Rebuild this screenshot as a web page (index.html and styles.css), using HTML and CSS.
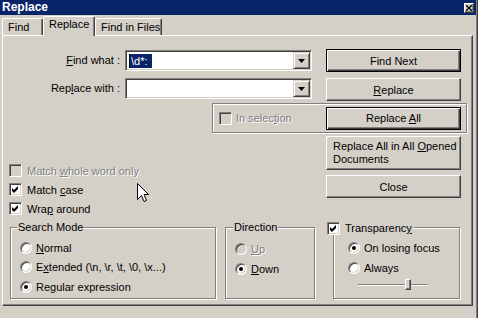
FILE: index.html
```html
<!DOCTYPE html>
<html lang="en">

<head>
    <meta charset="UTF-8">
    <title>Replace</title>
    <link rel="stylesheet" href="styles.css">
</head>

<body>
    <div class="window">
        <div class="titlebar">
            <span class="title">Replace</span>
            <span class="close-x">
                <svg width="6" height="6" viewBox="0 0 6 6"><path d="M0 0 L6 6 M6 0 L0 6" stroke="#000" stroke-width="1.3"/></svg>
            </span>
        </div>

        <div class="tabs">
            <div class="tab tab-find">Find</div>
            <div class="tab tab-replace active">Replace</div>
            <div class="tab tab-files">Find in Files</div>
        </div>

        <div class="panel">
            <div class="form">
                <label class="lbl lbl-find"><u>F</u>ind what :</label>
                <div class="combo combo-find">
                    <span class="combo-text"><span class="sel">\d*:</span></span>
                    <span class="drop"><svg width="7" height="4" viewBox="0 0 7 4"><path d="M0 0 H7 L3.5 4 Z" fill="#000"/></svg></span>
                </div>
                <button class="btn btn-default btn-next">Find Next</button>

                <label class="lbl lbl-repl">Rep<u>l</u>ace with :</label>
                <div class="combo combo-repl">
                    <span class="combo-text"></span>
                    <span class="drop"><svg width="7" height="4" viewBox="0 0 7 4"><path d="M0 0 H7 L3.5 4 Z" fill="#000"/></svg></span>
                </div>
                <button class="btn btn-replace"><u>R</u>eplace</button>

                <div class="selframe">
                    <span class="check off"></span>
                    <span class="disabled">In selec<u>t</u>ion</span>
                    <button class="btn btn-default btn-all">Replace <u>A</u>ll</button>
                </div>

                <button class="btn btn-docs">Replace All in All <u>O</u>pened<br>Documents</button>
                <button class="btn btn-close">Close</button>

                <div class="checks">
                    <div class="opt"><span class="check off"></span><span class="disabled">Match <u>w</u>hole word only</span></div>
                    <div class="opt"><span class="check"><svg width="7" height="7" viewBox="0 0 7 7"><path d="M0 2 L2 4 L6 0 V3 L2 7 L0 5 Z" fill="#000"/></svg></span><span>Match <u>c</u>ase</span></div>
                    <div class="opt"><span class="check"><svg width="7" height="7" viewBox="0 0 7 7"><path d="M0 2 L2 4 L6 0 V3 L2 7 L0 5 Z" fill="#000"/></svg></span><span>Wra<u>p</u> around</span></div>
                </div>
            </div>

            <div class="groups">
                <div class="group group-mode">
                    <span class="legend">Search Mode</span>
                    <div class="ropt"><span class="radio"></span><span><u>N</u>ormal</span></div>
                    <div class="ropt"><span class="radio"></span><span>E<u>x</u>tended (\n, \r, \t, \0, \x...)</span></div>
                    <div class="ropt"><span class="radio on"></span><span>Re<u>g</u>ular expression</span></div>
                </div>

                <div class="group group-dir">
                    <span class="legend">Direction</span>
                    <div class="ropt"><span class="radio off"></span><span class="disabled"><u>U</u>p</span></div>
                    <div class="ropt"><span class="radio on"></span><span><u>D</u>own</span></div>
                </div>

                <div class="group group-trans">
                    <span class="legend legend-check">
                        <span class="check"><svg width="7" height="7" viewBox="0 0 7 7"><path d="M0 2 L2 4 L6 0 V3 L2 7 L0 5 Z" fill="#000"/></svg></span>
                        <span>Transparenc<u>y</u></span>
                    </span>
                    <div class="ropt"><span class="radio on"></span><span>On losing focus</span></div>
                    <div class="ropt"><span class="radio"></span><span>Always</span></div>
                    <div class="slider">
                        <div class="track"></div>
                        <span class="thumb"></span>
                    </div>
                </div>
            </div>
        </div>

        <!-- mouse pointer -->
        <svg class="cursor" width="12" height="20" viewBox="0 0 12 20">
            <path d="M0.5 0.5 V16.5 L4.5 12.5 L7 18.5 L9.5 17.5 L7 11.5 H11.5 Z" fill="#fff" stroke="#000" stroke-width="1"/>
        </svg>
    </div>
</body>

</html>
```
FILE: styles.css
```css
/* Reset */
* {
    margin: 0;
    padding: 0;
    box-sizing: border-box;
}

body {
    width: 481px;
    height: 318px;
    overflow: hidden;
    background: #ffffff;
    font: 11px "Liberation Sans", Arial, sans-serif;
    color: #000;
}

u {
    text-decoration: underline;
    text-underline-offset: 1px;
}

/* Window frame */
.window {
    position: relative;
    width: 478px;
    height: 318px;
    background: #d4d0c8;
    border-right: 1px solid #404040;
    box-shadow: inset -1px 0 #808080;
}

.titlebar {
    height: 15px;
    margin-right: 1px;
    background: #0a246a;
    display: flex;
    align-items: center;
    justify-content: space-between;
}

.title {
    color: #fff;
    font-weight: bold;
    font-size: 12px;
    padding-left: 2px;
    line-height: 15px;
}

.close-x {
    width: 10px;
    height: 10px;
    margin-right: 2px;
    background: #d4d0c8;
    border: 1px solid;
    border-color: #fff #404040 #404040 #fff;
    box-shadow: inset -1px -1px #808080;
    display: flex;
    align-items: center;
    justify-content: center;
}

/* Tabs */
.tabs {
    display: flex;
    height: 20px;
    padding-left: 2px;
    align-items: flex-start;
}

.tab {
    margin-top: 3px;
    height: 17px;
    padding: 1px 0 0 5px;
    line-height: 15px;
    background: #d4d0c8;
    border-top: 1px solid #fff;
    border-left: 1px solid #fff;
    border-right: 1px solid #404040;
    box-shadow: inset -1px 0 #808080;
    border-radius: 2px 2px 0 0;
}

.tab-find {
    width: 41px;
}

.tab-replace {
    width: 52px;
}

.tab-files {
    width: 67px;
}

.tab.active {
    position: relative;
    z-index: 1;
    margin-top: 1px;
    height: 20px;
    padding-top: 0;
}

/* Tab page */
.panel {
    position: relative;
    margin-left: 2px;
    width: 471px;
    height: 271px;
    border: 1px solid;
    border-color: #fff #404040 #404040 #fff;
    box-shadow: inset -1px -1px #808080;
}

.form {
    display: grid;
    grid-template-columns: 122px 187px 14px 135px;
    grid-template-rows: 29px 25px 30px 39px 24px auto;
    margin-top: 13px;
    align-items: start;
}

.lbl {
    grid-column: 1;
    text-align: right;
    padding-right: 5px;
    line-height: 21px;
}

.lbl-find {
    grid-row: 1;
    margin-top: 1px;
}

.lbl-repl {
    grid-row: 2;
}

/* Combo boxes */
.combo {
    grid-column: 2;
    height: 21px;
    background: #fff;
    border: 1px solid;
    border-color: #808080 #fff #fff #808080;
    box-shadow: inset 1px 1px #404040, inset -1px -1px #d4d0c8;
    display: flex;
    align-items: center;
    padding: 1px;
}

.combo-find {
    grid-row: 1;
    margin-top: 1px;
}

.combo-repl {
    grid-row: 2;
}

.combo-text {
    flex: 1;
    padding-left: 2px;
    display: flex;
    align-items: center;
}

.sel {
    background: #0a246a;
    color: #fff;
    border-left: 1px solid #000;
    padding: 0 4px 0 1px;
    line-height: 14px;
}

.drop {
    width: 17px;
    height: 17px;
    background: #d4d0c8;
    border: 1px solid;
    border-color: #d4d0c8 #404040 #404040 #d4d0c8;
    box-shadow: inset 1px 1px #fff, inset -1px -1px #808080;
    display: flex;
    align-items: center;
    justify-content: center;
}

/* Push buttons */
.btn {
    font: inherit;
    color: #000;
    height: 23px;
    background: #d4d0c8;
    border: 1px solid;
    border-color: #fff #404040 #404040 #fff;
    box-shadow: inset -1px -1px #808080;
    text-align: center;
}

.btn-default {
    border-color: #000;
    box-shadow: inset 1px 1px #fff, inset -1px -1px #404040, inset -2px -2px #808080;
}

.btn-next,
.btn-replace,
.btn-docs,
.btn-close {
    grid-column: 4;
}

.btn-next {
    grid-row: 1;
}

.btn-replace {
    grid-row: 2;
}

.btn-docs {
    grid-row: 4;
    margin-top: 3px;
    height: 34px;
    text-align: left;
    padding-left: 6px;
    line-height: 13px;
}

.btn-close {
    grid-row: 5;
    margin-top: 3px;
}

/* In selection frame */
.selframe {
    grid-column: 2 / 5;
    grid-row: 3;
    margin-left: 87px;
    margin-right: -6px;
    height: 30px;
    display: flex;
    align-items: center;
    gap: 4px;
    padding: 0 5px 0 6px;
    border: 1px solid #808080;
    box-shadow: inset 1px 1px #fff, 1px 1px #fff;
}

.btn-all {
    margin-left: auto;
    width: 135px;
}

/* Check boxes */
.check {
    flex: none;
    width: 13px;
    height: 13px;
    background: #fff;
    border: 1px solid;
    border-color: #808080 #fff #fff #808080;
    box-shadow: inset 1px 1px #404040, inset -1px -1px #d4d0c8;
    display: flex;
    align-items: center;
    justify-content: center;
}

.check.off {
    background: #d4d0c8;
}

.disabled {
    color: #808080;
    text-shadow: 1px 1px #fff;
}

.checks {
    grid-column: 1 / 3;
    grid-row: 4 / 7;
    margin-top: 28px;
    padding-left: 6px;
}

.opt {
    height: 19px;
    display: flex;
    align-items: center;
    gap: 5px;
}

/* Group boxes */
.groups {
    display: flex;
    padding-left: 7px;
    margin-top: 9px;
}

.group {
    position: relative;
    height: 72px;
    border: 1px solid #808080;
    box-shadow: inset 1px 1px #fff, 1px 1px #fff;
    padding-top: 10px;
}

.group-mode {
    width: 206px;
    padding-left: 9px;
}

.group-dir {
    width: 90px;
    margin-left: 9px;
    padding-left: 9px;
    padding-top: 11px;
}

.group-trans {
    width: 127px;
    margin-left: 18px;
    padding-left: 14px;
}

.legend {
    position: absolute;
    top: -7px;
    left: 6px;
    padding: 0 1px;
    line-height: 13px;
    background: #d4d0c8;
}

.group-dir .legend {
    left: 7px;
}

.legend-check {
    top: -6px;
    left: -7px;
    padding: 0 2px 0 0;
    display: flex;
    align-items: center;
    gap: 5px;
}

.ropt {
    display: flex;
    align-items: center;
    gap: 4px;
    height: 19.5px;
}

.group-dir .ropt,
.group-trans .ropt {
    height: 20px;
}

.radio {
    position: relative;
    flex: none;
    width: 12px;
    height: 12px;
    border-radius: 50%;
    background: #fff;
    border: 1px solid;
    border-color: #808080 #fff #fff #808080;
    box-shadow: inset 1px 1px #404040, inset -1px -1px #d4d0c8;
}

.radio.off {
    background: #d4d0c8;
}

.radio.on::after {
    content: "";
    position: absolute;
    left: 3px;
    top: 3px;
    width: 4px;
    height: 4px;
    border-radius: 50%;
    background: #000;
}

/* Transparency slider */
.slider {
    position: relative;
    margin-left: 10px;
    width: 70px;
    height: 13px;
}

.track {
    position: relative;
    top: 6px;
    height: 2px;
    border-top: 1px solid #808080;
    border-bottom: 1px solid #fff;
}

.thumb {
    position: absolute;
    left: 47px;
    top: 1px;
    width: 6px;
    height: 11px;
    background: #d4d0c8;
    border: 1px solid;
    border-color: #fff #404040 #404040 #fff;
    box-shadow: inset -1px -1px #808080;
}

/* Mouse pointer over the dialog */
.cursor {
    position: absolute;
    left: 137px;
    top: 183px;
}
```
